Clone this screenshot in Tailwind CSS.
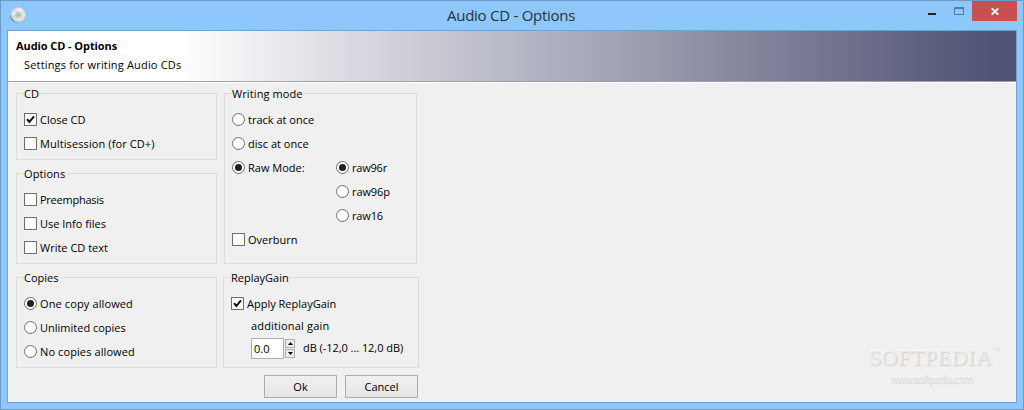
<!DOCTYPE html>
<html lang="en">
<head>
  <meta charset="UTF-8" />
  <meta name="viewport" content="width=device-width, initial-scale=1.0" />
  <title>Audio CD - Options</title>
  <script src="https://cdn.jsdelivr.net/npm/@tailwindcss/browser@4"></script>
</head>
<body class="font-['Open_Sans','Noto_Sans',sans-serif] text-[11px] leading-4 text-black">
  <div class="w-[1024px] h-[410px] flex flex-col bg-[#8dc7fb] border border-[#6b9bc8] overflow-hidden">

    <!-- Title bar -->
    <div class="h-[29px] shrink-0 flex items-start justify-between pl-[9px] pr-[6px] relative">
      <svg class="w-4 h-4 mt-[6px]" viewBox="0 0 16 16">
        <defs>
          <linearGradient id="disc" x1="0" y1="0" x2="1" y2="1">
            <stop offset="0" stop-color="#d5d5e4" />
            <stop offset=".35" stop-color="#f4f2f4" />
            <stop offset=".6" stop-color="#d9e5d2" />
            <stop offset="1" stop-color="#eeeeee" />
          </linearGradient>
        </defs>
        <ellipse cx="6.6" cy="9.4" rx="6.2" ry="5.8" fill="#5f87ad" />
        <circle cx="8.3" cy="7.7" r="7.1" fill="url(#disc)" stroke="#c9cfd6" stroke-width=".5" />
        <path d="M8.3 7.7 3 3.5A7 7 0 0 1 7 .9z" fill="#e7d4e4" />
        <path d="M8.3 7.7 1.4 8A7 7 0 0 0 4 13z" fill="#d3dccb" />
        <path d="M8.3 7.7 12 13.5A7 7 0 0 0 15 9.5z" fill="#f0ddd4" />
        <circle cx="8.3" cy="7.7" r="2.6" fill="#c3d5e2" stroke="#a3b6c8" stroke-width=".7" />
        <circle cx="8.3" cy="7.7" r="1" fill="#7fa5c6" />
      </svg>
      <h1 class="absolute left-[446px] top-[4px] text-[15px] leading-5 tracking-[-0.26px] text-[#26323e] whitespace-nowrap">Audio CD - Options</h1>
      <div class="flex items-start">
        <div class="w-2 h-[2px] bg-[#222] mt-[12px] mr-[18px]"></div>
        <div class="w-[10px] h-2 border border-t-2 border-[#587b9c] mt-[6px] mr-2"></div>
        <div class="w-[45px] h-5 bg-[#c75050] flex justify-center">
          <svg class="w-2 h-[7px] mt-[7px] ml-[1px]" viewBox="0 0 8 7" fill="none" stroke="#fff" stroke-width="1.8">
            <path d="M.7.3 7.3 6.7M7.3.3.7 6.7" />
          </svg>
        </div>
      </div>
    </div>

    <!-- Client area -->
    <div class="mx-[6px] h-[373px] shrink-0 border border-[#6fa3d3] bg-[#f0f0f0] flex flex-col">
      <header class="h-[52px] shrink-0 border-b border-b-white">
        <div class="h-[51px] border-b border-[#a0a0a0] bg-linear-to-r from-white from-17% via-[#a2a4b5] via-60% to-[#505273] to-98% pl-2 pt-[7px]">
          <h2 class="font-bold tracking-[-0.08px]">Audio CD - Options</h2>
          <p class="pl-2 mt-[3px] tracking-[0.17px]">Settings for writing Audio CDs</p>
        </div>
      </header>

      <main class="relative flex-1">
        <div class="flex items-start pl-2 pt-[10px] gap-[6px]">
          <!-- Left column -->
          <div class="w-[201px] flex flex-col gap-[13px]">
            <section class="relative h-[67px] border border-[#dcdcdc] pl-[7px] pt-[13px]">
              <h3 class="absolute left-[7px] -top-[8px] bg-[#f0f0f0] leading-4">CD</h3>
              <div class="h-6 flex items-start pt-[6px] gap-[3px]">
                <span class="w-[13px] h-[13px] shrink-0 border border-[#707070] bg-white flex"><svg class="w-[11px] h-[11px]" viewBox="0 0 11 11" fill="none" stroke="#111" stroke-width="2"><path d="M2 5.2 4.4 8 9 2.4" /></svg></span>
                <span class="-mt-px">Close CD</span>
              </div>
              <div class="h-6 flex items-start pt-[6px] gap-[3px]">
                <span class="w-[13px] h-[13px] shrink-0 border border-[#707070] bg-white"></span>
                <span class="-mt-px tracking-[0.1px]">Multisession (for CD+)</span>
              </div>
            </section>

            <section class="relative h-[91px] border border-[#dcdcdc] pl-[7px] pt-[13px]">
              <h3 class="absolute left-[7px] -top-[8px] bg-[#f0f0f0] leading-4 tracking-[0.1px]">Options</h3>
              <div class="h-6 flex items-start pt-[6px] gap-[3px]">
                <span class="w-[13px] h-[13px] shrink-0 border border-[#707070] bg-white"></span>
                <span class="-mt-px tracking-[-0.25px]">Preemphasis</span>
              </div>
              <div class="h-6 flex items-start pt-[6px] gap-[3px]">
                <span class="w-[13px] h-[13px] shrink-0 border border-[#707070] bg-white"></span>
                <span class="-mt-px">Use Info files</span>
              </div>
              <div class="h-6 flex items-start pt-[6px] gap-[3px]">
                <span class="w-[13px] h-[13px] shrink-0 border border-[#707070] bg-white"></span>
                <span class="-mt-px">Write CD text</span>
              </div>
            </section>

            <section class="relative h-[91px] border border-[#dcdcdc] pl-[7px] pt-[13px]">
              <h3 class="absolute left-[7px] -top-[8px] bg-[#f0f0f0] leading-4">Copies</h3>
              <div class="h-6 flex items-start pt-[6px] gap-[3px]">
                <span class="w-[13px] h-[13px] shrink-0 rounded-full border border-[#707070] bg-white flex items-center justify-center"><span class="w-[7px] h-[7px] rounded-full bg-[#222]"></span></span>
                <span class="-mt-px tracking-[0.12px]">One copy allowed</span>
              </div>
              <div class="h-6 flex items-start pt-[6px] gap-[3px]">
                <span class="w-[13px] h-[13px] shrink-0 rounded-full border border-[#707070] bg-white"></span>
                <span class="-mt-px">Unlimited copies</span>
              </div>
              <div class="h-6 flex items-start pt-[6px] gap-[3px]">
                <span class="w-[13px] h-[13px] shrink-0 rounded-full border border-[#707070] bg-white"></span>
                <span class="-mt-px tracking-[0.1px]">No copies allowed</span>
              </div>
            </section>
          </div>

          <!-- Right column -->
          <div class="w-[196px] flex flex-col">
            <section class="relative ml-[1px] w-[193px] h-[171px] border border-[#dcdcdc] pl-[7px] pt-[13px]">
              <h3 class="absolute left-[7px] -top-[8px] bg-[#f0f0f0] leading-4 tracking-[0.1px] whitespace-nowrap">Writing mode</h3>
              <div class="h-6 flex items-start pt-[6px] gap-[3px]">
                <span class="w-[13px] h-[13px] shrink-0 rounded-full border border-[#707070] bg-white"></span>
                <span class="-mt-px">track at once</span>
              </div>
              <div class="h-6 flex items-start pt-[6px] gap-[3px]">
                <span class="w-[13px] h-[13px] shrink-0 rounded-full border border-[#707070] bg-white"></span>
                <span class="-mt-px">disc at once</span>
              </div>
              <div class="flex">
                <div class="w-[104px] h-6 flex items-start pt-[6px] gap-[3px]">
                  <span class="w-[13px] h-[13px] shrink-0 rounded-full border border-[#707070] bg-white flex items-center justify-center"><span class="w-[7px] h-[7px] rounded-full bg-[#222]"></span></span>
                  <span class="-mt-px">Raw Mode:</span>
                </div>
                <div>
                  <div class="h-6 flex items-start pt-[6px] gap-[3px]">
                    <span class="w-[13px] h-[13px] shrink-0 rounded-full border border-[#707070] bg-white flex items-center justify-center"><span class="w-[7px] h-[7px] rounded-full bg-[#222]"></span></span>
                    <span class="-mt-px tracking-[-0.2px]">raw96r</span>
                  </div>
                  <div class="h-6 flex items-start pt-[6px] gap-[3px]">
                    <span class="w-[13px] h-[13px] shrink-0 rounded-full border border-[#707070] bg-white"></span>
                    <span class="-mt-px tracking-[-0.1px]">raw96p</span>
                  </div>
                  <div class="h-6 flex items-start pt-[6px] gap-[3px]">
                    <span class="w-[13px] h-[13px] shrink-0 rounded-full border border-[#707070] bg-white"></span>
                    <span class="-mt-px tracking-[-0.15px]">raw16</span>
                  </div>
                </div>
              </div>
              <div class="h-6 flex items-start pt-[6px] gap-[3px]">
                <span class="w-[13px] h-[13px] shrink-0 border border-[#707070] bg-white"></span>
                <span class="-mt-px">Overburn</span>
              </div>
            </section>

            <section class="relative mt-[13px] h-[91px] border border-[#dcdcdc] pl-[7px] pt-[13px]">
              <h3 class="absolute left-[7px] -top-[8px] bg-[#f0f0f0] leading-4">ReplayGain</h3>
              <div class="h-6 flex items-start pt-[6px] gap-[3px]">
                <span class="w-[13px] h-[13px] shrink-0 border border-[#707070] bg-white flex"><svg class="w-[11px] h-[11px]" viewBox="0 0 11 11" fill="none" stroke="#111" stroke-width="2"><path d="M2 5.2 4.4 8 9 2.4" /></svg></span>
                <span class="-mt-px">Apply ReplayGain</span>
              </div>
              <p class="pl-5 mt-[3px] tracking-[0.17px]">additional gain</p>
              <div class="flex items-center pl-5 mt-[4px]">
                <div class="w-[33px] h-[21px] border border-[#abadb3] bg-white pl-[2px] leading-[19px]">0.0</div>
                <div class="ml-[1px] flex flex-col gap-[1px]">
                  <span class="w-[10px] h-[9px] border border-[#acacac] bg-[#ececec] flex items-center justify-center"><svg class="w-[5px] h-[3px]" viewBox="0 0 5 3"><path d="M0 3 2.5 0 5 3z" /></svg></span>
                  <span class="w-[10px] h-[9px] border border-[#acacac] bg-[#ececec] flex items-center justify-center"><svg class="w-[5px] h-[3px]" viewBox="0 0 5 3"><path d="M0 0h5L2.5 3z" /></svg></span>
                </div>
                <span class="ml-2 -mt-[2px] tracking-[-0.05px] whitespace-nowrap">dB (-12,0 ... 12,0 dB)</span>
              </div>
            </section>
          </div>
        </div>

        <!-- Buttons -->
        <div class="flex gap-2 pl-[256px] mt-[7px]">
          <button class="w-[73px] h-[23px] border border-[#acacac] bg-linear-to-b from-[#f0f0f0] to-[#e5e5e5]">Ok</button>
          <button class="w-[73px] h-[23px] border border-[#acacac] bg-linear-to-b from-[#f0f0f0] to-[#e5e5e5]">Cancel</button>
        </div>

        <!-- Watermark -->
        <div class="absolute left-[861px] top-[261px] text-[#e8e8e8] [text-shadow:1px_1px_1px_#cfcfcf,-1px_-1px_1px_#f8f8f8] whitespace-nowrap">
          <div class="font-['Liberation_Serif',serif] text-[22px] leading-7 tracking-[0.5px]">SOFTPEDIA<span class="absolute left-[123px] -top-[8px] text-[7px]">™</span></div>
          <div class="pl-[21px] text-[10px] leading-3 mt-[1px] tracking-[-0.6px]">www.softpedia.com</div>
        </div>
      </main>
    </div>
  </div>
</body>
</html>
